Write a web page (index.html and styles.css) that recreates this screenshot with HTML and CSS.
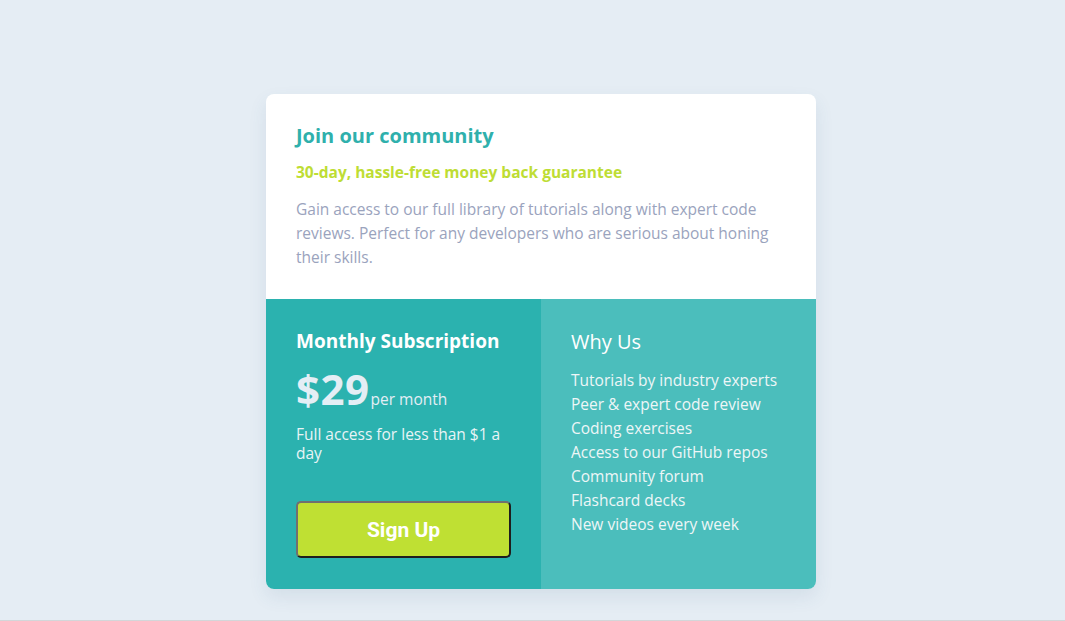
FILE: index.html
```html
<!DOCTYPE html>
<html lang="en">
<head>
<meta charset="utf-8">
<title>Join our community</title>
<link rel="stylesheet" href="styles.css">
</head>
<body>
<main class="page">
  <section class="card">
    <div class="intro">
      <h1 class="title">Join our community</h1>
      <h2 class="guarantee">30-day, hassle-free money back guarantee</h2>
      <p class="desc">Gain access to our full library of tutorials along with expert code reviews. Perfect for any developers who are serious about honing their skills.</p>
    </div>
    <div class="bottom">
      <div class="pricing">
        <h3 class="plan">Monthly Subscription</h3>
        <div class="price"><span class="amount">$29</span><span class="per">per month</span></div>
        <p class="note">Full access for less than $1 a day</p>
        <button class="signup">Sign Up</button>
      </div>
      <div class="why">
        <h3 class="why-title">Why Us</h3>
        <ul class="why-list">
          <li>Tutorials by industry experts</li>
          <li>Peer &amp; expert code review</li>
          <li>Coding exercises</li>
          <li>Access to our GitHub repos</li>
          <li>Community forum</li>
          <li>Flashcard decks</li>
          <li>New videos every week</li>
        </ul>
      </div>
    </div>
  </section>
</main>
</body>
</html>
```

FILE: styles.css
```css
* { box-sizing: border-box; }
html, body { margin: 0; padding: 0; }
body {
  background: #e5edf4;
  font-family: "Open Sans", "Liberation Sans", sans-serif;
  height: 621px;
  overflow: hidden;
  border-bottom: 1px solid #d3d6d9;
}
.page {
  display: flex;
  justify-content: center;
  padding: 94px 0 0 17px;
}
.card {
  width: 550px;
  border-radius: 8px;
  overflow: hidden;
  background: #fff;
  box-shadow: 0 8px 18px rgba(60, 100, 140, 0.10);
}
.intro {
  height: 205px;
  padding: 26px 30px 0 30px;
}
.title {
  margin: 0;
  font-size: 20px;
  font-weight: 700;
  color: #2fb0ac;
  line-height: 32px;
}
.guarantee {
  margin: 10px 0 0;
  font-size: 15.5px;
  font-weight: 700;
  color: #bedd34;
  line-height: 20px;
}
.desc {
  margin: 15px 0 0;
  font-size: 15.5px;
  line-height: 24px;
  color: #9aa3bd;
}
.bottom {
  display: flex;
  height: 290px;
}
.pricing {
  width: 275px;
  background: #2bb2af;
  padding: 28px 30px 0 30px;
  color: #fff;
}
.plan {
  margin: 0;
  font-size: 19px;
  font-weight: 700;
  line-height: 28px;
}
.price {
  margin-top: 12px;
  display: flex;
  align-items: baseline;
  color: #e4eef5;
}
.amount {
  font-size: 42px;
  font-weight: 700;
  line-height: 44px;
  letter-spacing: 0.5px;
}
.per {
  font-size: 15.5px;
  margin-left: 1px;
}
.note {
  margin: 14px 0 0;
  font-size: 15.5px;
  line-height: 19px;
  color: #e8f4f6;
}
.signup {
  display: block;
  margin-top: 38px;
  width: 215px;
  height: 57px;
  border-radius: 5px;
  background: #bfe033;
  border: 2px solid;
  border-color: #707070 #1e1e1e #1e1e1e #707070;
  color: #fff;
  font-family: Roboto, "Liberation Sans", sans-serif;
  font-weight: 700;
  font-size: 21px;
}
.why {
  width: 275px;
  background: #4bbebc;
  padding: 29px 30px 0 30px;
  color: #eef6f7;
}
.why-title {
  margin: 0;
  font-size: 20px;
  font-weight: 400;
  line-height: 28px;
  color: #fff;
}
.why-list {
  list-style: none;
  margin: 12px 0 0;
  padding: 0;
  font-size: 15.5px;
  line-height: 24px;
}
```
